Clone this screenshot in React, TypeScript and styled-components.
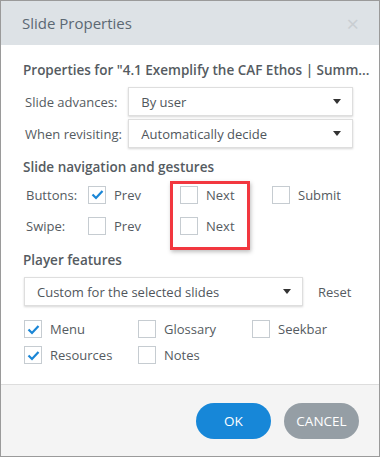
import React from "react";
import styled, { createGlobalStyle } from "styled-components";

const GlobalStyle = createGlobalStyle`
  html, body {
    margin: 0;
    padding: 0;
    background: #ffffff;
  }
  body {
    font-family: "Open Sans", "Noto Sans", sans-serif;
    color: #555b61;
  }
`;

type CheckProps = {
  label: string;
  checked?: boolean;
};

const Check = ({ label, checked = false }: CheckProps) => (
  <CheckItem>
    <Box>
      {checked && (
        <svg width="13" height="11" viewBox="0 0 13 11">
          <path d="M1.5 5.5 L5 9 L11.5 2" fill="none" stroke="#1a86d6" strokeWidth="2.2" />
        </svg>
      )}
    </Box>
    <CheckText>{label}</CheckText>
  </CheckItem>
);

const Select = ({ value, width }: { value: string; width?: number }) => (
  <SelectBox $width={width}>
    <span>{value}</span>
    <Caret />
  </SelectBox>
);

const App = () => {
  return (
    <>
      <GlobalStyle />
      <Dialog>
        <Header>
          <Title>Slide Properties</Title>
          <Close>×</Close>
        </Header>
        <Body>
          <SectionTitle>Properties for "4.1 Exemplify the CAF Ethos | Summ...</SectionTitle>
          <FieldRows>
            <FieldRow>
              <FieldLabel>Slide advances:</FieldLabel>
              <Select value="By user" />
            </FieldRow>
            <FieldRow>
              <FieldLabel>When revisiting:</FieldLabel>
              <Select value="Automatically decide" />
            </FieldRow>
          </FieldRows>

          <SectionTitle $top={9}>Slide navigation and gestures</SectionTitle>
          <NavGrid>
            <RowLabel>Buttons:</RowLabel>
            <Check label="Prev" checked />
            <Highlighted>
              <Check label="Next" />
              <Check label="Next" />
            </Highlighted>
            <Check label="Submit" />
            <RowLabel>Swipe:</RowLabel>
            <Check label="Prev" />
          </NavGrid>

          <SectionTitle $top={9}>Player features</SectionTitle>
          <PlayerRow>
            <Select value="Custom for the selected slides" width={279} />
            <ResetLink>Reset</ResetLink>
          </PlayerRow>
          <FeatureGrid>
            <Check label="Menu" checked />
            <Check label="Glossary" />
            <Check label="Seekbar" />
            <Check label="Resources" checked />
            <Check label="Notes" />
          </FeatureGrid>
        </Body>
        <Footer>
          <PillButton $variant="primary">OK</PillButton>
          <PillButton $variant="secondary">CANCEL</PillButton>
        </Footer>
      </Dialog>
    </>
  );
};

const Dialog = styled.div`
  width: 380px;
  height: 457px;
  box-sizing: border-box;
  border: 1px solid #9a9a9a;
  display: flex;
  flex-direction: column;
  background: #ffffff;
`;

const Header = styled.div`
  height: 44px;
  flex: none;
  background: #dde2e6;
  display: flex;
  align-items: center;
  justify-content: space-between;
  padding: 0 20px 0 21px;
`;

const Title = styled.div`
  font-size: 15px;
  color: #5b6873;
  padding-bottom: 1px;
`;

const Close = styled.div`
  font-size: 22px;
  color: #c9ced2;
  line-height: 1;
`;

const Body = styled.div`
  flex: 1;
  padding: 15px 26px 0 22px;
  display: flex;
  flex-direction: column;
`;

const SectionTitle = styled.div<{ $top?: number }>`
  font-size: 13.5px;
  font-weight: 600;
  color: #555b61;
  line-height: 20px;
  margin-top: ${(p) => p.$top ?? 0}px;
  white-space: nowrap;
`;

const FieldRows = styled.div`
  display: flex;
  flex-direction: column;
  gap: 3px;
  margin-top: 7px;
`;

const FieldRow = styled.div`
  display: flex;
  align-items: center;
`;

const FieldLabel = styled.div`
  width: 104px;
  padding-left: 2px;
  font-size: 13px;
`;

const SelectBox = styled.div<{ $width?: number }>`
  box-sizing: border-box;
  width: ${(p) => (p.$width ? `${p.$width}px` : "226px")};
  height: 29px;
  border: 1px solid #dedede;
  box-shadow: 0 1px 2px rgba(0, 0, 0, 0.16);
  display: flex;
  align-items: center;
  justify-content: space-between;
  padding: 0 11px 0 12px;
  font-size: 13px;
  color: #50565c;
`;

const Caret = styled.div`
  width: 0;
  height: 0;
  border-left: 4.5px solid transparent;
  border-right: 4.5px solid transparent;
  border-top: 5px solid #333;
`;

const NavGrid = styled.div`
  display: grid;
  grid-template-columns: 65px 92px 92px auto;
  grid-template-rows: 31px 31px;
  align-items: center;
  margin-top: 2px;
`;

const RowLabel = styled.div`
  font-size: 13px;
  padding-left: 3px;
`;

const Highlighted = styled.div`
  grid-row: 1 / span 2;
  grid-column: 3;
  align-self: stretch;
  position: relative;
  display: grid;
  grid-template-rows: 31px 31px;
  align-items: center;

  &::after {
    content: "";
    position: absolute;
    left: -10px;
    top: 2px;
    width: 80px;
    height: 69px;
    box-sizing: border-box;
    border: 3px solid #f2373f;
    box-shadow: 1px 2px 4px rgba(0, 0, 0, 0.25);
    pointer-events: none;
  }
`;

const CheckItem = styled.div`
  display: flex;
  align-items: center;
  gap: 8px;
`;

const Box = styled.div`
  box-sizing: border-box;
  width: 18px;
  height: 18px;
  border: 1px solid #c6ccd1;
  display: flex;
  align-items: center;
  justify-content: center;
  background: #fff;
`;

const CheckText = styled.span`
  font-size: 13px;
  color: #555b61;
`;

const PlayerRow = styled.div`
  display: flex;
  align-items: center;
  gap: 15px;
  margin-top: 7px;
  margin-left: 1px;
`;

const ResetLink = styled.span`
  font-size: 13px;
  color: #555b61;
`;

const FeatureGrid = styled.div`
  display: grid;
  grid-template-columns: 114px 114px auto;
  grid-auto-rows: 26px;
  align-items: center;
  margin-top: 10px;
  margin-left: 1px;
`;

const Footer = styled.div`
  height: 71px;
  flex: none;
  background: #f4f4f4;
  border-top: 1px solid #dddddd;
  display: flex;
  align-items: center;
  justify-content: flex-end;
  gap: 13px;
  padding-right: 20px;
`;

const PillButton = styled.div<{ $variant: "primary" | "secondary" }>`
  width: 75px;
  height: 36px;
  border-radius: 18px;
  display: flex;
  align-items: center;
  justify-content: center;
  font-size: 13.5px;
  color: #ffffff;
  background: ${(p) => (p.$variant === "primary" ? "#1787d8" : "#959ea5")};
`;

export default App;
